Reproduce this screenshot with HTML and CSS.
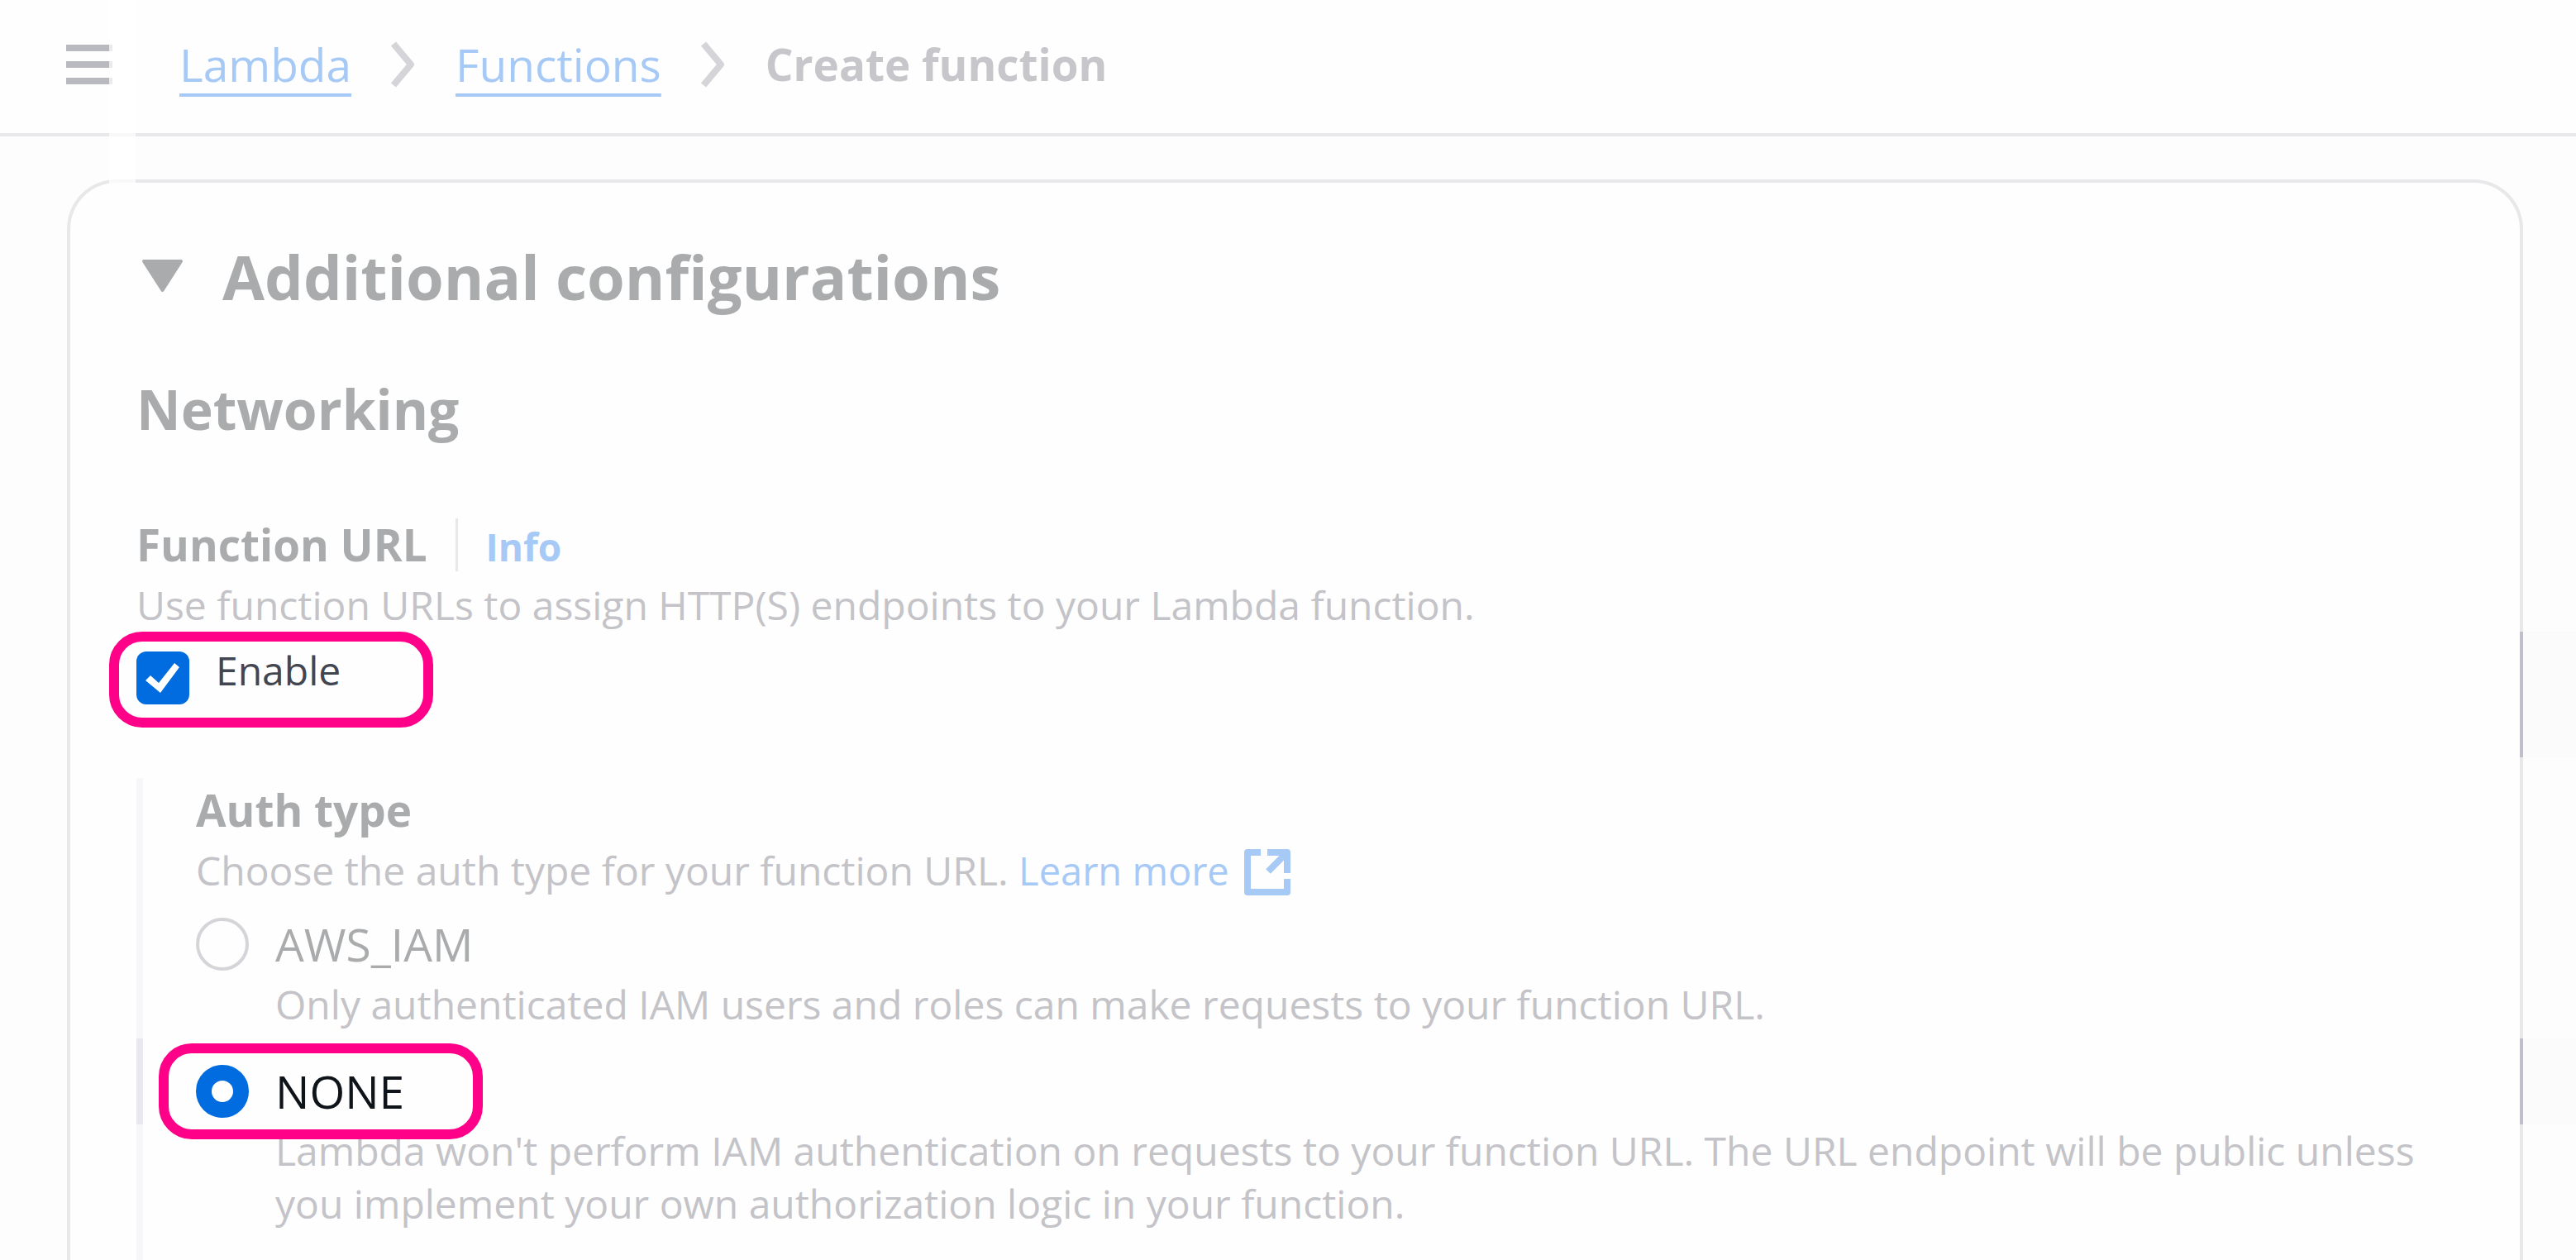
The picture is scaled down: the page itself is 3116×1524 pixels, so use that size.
FILE: index.html
```html
<!DOCTYPE html>
<html lang="en">
<head>
  <meta charset="UTF-8">
  <title>Create function - Lambda</title>
  <link rel="stylesheet" href="styles.css">
</head>
<body>
  <header>
    <button class="menu-button" aria-label="Open menu">
      <svg width="56" height="48" viewBox="0 0 56 48">
        <path d="M0 4H56M0 24H56M0 44H56" stroke="currentColor" stroke-width="8"/>
      </svg>
    </button>
    <nav class="breadcrumbs">
      <a href="#">Lambda</a>
      <svg class="chevron" width="32" height="56" viewBox="0 0 32 56">
        <path d="M4 3L25 28L4 53" fill="none" stroke="currentColor" stroke-width="8" stroke-linejoin="round"/>
      </svg>
      <a href="#">Functions</a>
      <svg class="chevron" width="32" height="56" viewBox="0 0 32 56">
        <path d="M4 3L25 28L4 53" fill="none" stroke="currentColor" stroke-width="8" stroke-linejoin="round"/>
      </svg>
      <strong>Create function</strong>
    </nav>
  </header>

  <main>
    <div class="card">
      <h2>
        <svg width="64" height="64" viewBox="0 0 64 64">
          <path d="M9 13H54L31.500 48Z" fill="currentColor" stroke="currentColor" stroke-width="4" stroke-linejoin="round"/>
        </svg>
        Additional configurations
      </h2>
      <h3>Networking</h3>

      <div class="label-row">
        <span class="label">Function URL</span>
        <span class="divider"></span>
        <a class="info" href="#">Info</a>
      </div>
      <p class="description">Use function URLs to assign HTTP(S) endpoints to your Lambda function.</p>
      <label class="highlight highlight-check">
        <span class="checkbox">
          <input type="checkbox" checked>
          <svg width="64" height="64" viewBox="0 0 64 64">
            <path d="M11 35L17 29L27 38L46 14L52 19L29 50Z" fill="#fff"/>
          </svg>
        </span>
        Enable
      </label>

      <section class="nested">
        <div class="label">Auth type</div>
        <p class="description">Choose the auth type for your function URL.
          <a class="learn-more" href="#">Learn more<svg width="56" height="56" viewBox="0 0 56 56">
            <path d="M20 4H4V52H52V36M28 4H52V29M52 4L29 27" fill="none" stroke="currentColor" stroke-width="8" stroke-linejoin="round"/>
          </svg></a>
        </p>

        <label class="option">
          <input type="radio" name="auth" value="AWS_IAM">
          AWS_IAM
        </label>
        <p class="description option-text">Only authenticated IAM users and roles can make requests to your function URL.</p>

        <label class="option highlight highlight-radio">
          <input type="radio" name="auth" value="NONE" checked>
          NONE
        </label>
        <p class="description option-text option-text-last">Lambda won't perform IAM authentication on requests to your function URL. The URL endpoint will be public unless you implement your own authorization logic in your function.</p>
        <span class="nested-mark"></span>
      </section>

      <span class="edge edge-check"></span>
      <span class="edge edge-radio"></span>
    </div>
  </main>
  <div class="veil"></div>
</body>
</html>
```
FILE: styles.css
```css
* {
  box-sizing: border-box;
}

body {
  display: flex;
  flex-direction: column;
  min-height: 100vh;
  margin: 0;
  font-family: "Open Sans", "Noto Sans", sans-serif;
  font-size: 48px;
  line-height: 64px;
  color: #a9abac;
  background-color: #fdfdfd;
  overflow-x: hidden;
}

h2, h3, p {
  margin: 0;
}

a {
  color: #a6c9f6;
  text-decoration: none;
}

input {
  appearance: none;
  flex: none;
  width: 64px;
  height: 64px;
  margin: 0;
}

/* top bar */
header {
  display: flex;
  align-items: center;
  gap: 81px;
  padding: 38px 80px 43px;
  line-height: 80px;
  background-color: #fefefe;
  border-bottom: 4px solid #e8e8ea;
}

.menu-button {
  display: flex;
  padding: 0;
  border: none;
  background: none;
  color: #b9bac0;
  cursor: pointer;
}

.breadcrumbs {
  display: flex;
  align-items: center;
  gap: 47px;
  font-size: 55px;
}

.breadcrumbs a {
  text-decoration: underline;
  text-decoration-thickness: 4px;
  text-underline-offset: 14px;
}

.breadcrumbs strong {
  font-size: 53px;
  color: #c6c6cb;
}

.chevron {
  color: #d5d5d9;
}

/* card */
main {
  flex: 1;
  display: flex;
  padding: 52px 64px 0 81px;
}

.card {
  position: relative;
  flex: 1;
  display: flex;
  flex-direction: column;
  padding: 69px 82px 0 80px;
  background-color: #fefefe;
  border: 4px solid #e8e8ea;
  border-bottom: none;
  border-radius: 60px 60px 0 0;
}

h2 {
  display: flex;
  align-items: center;
  gap: 40px;
  font-size: 74px;
  line-height: 90px;
}

h3 {
  margin-top: 74px;
  font-size: 66px;
  line-height: 80px;
}

.label-row {
  display: flex;
  align-items: baseline;
  gap: 34px;
  margin-top: 93px;
}

.label {
  font-size: 53px;
  font-weight: 700;
}

.divider {
  align-self: stretch;
  width: 3px;
  background-color: #e8e8ea;
}

.info {
  font-size: 46px;
  font-weight: 700;
  line-height: 48px;
}

.description {
  margin-top: 9px;
  color: #c3c3c8;
}

/* pink frames */
.highlight {
  position: relative;
  z-index: 1;
  display: flex;
  width: 392px;
  height: 116px;
  border: 12px solid #ff0089;
  border-radius: 40px;
  background-color: #fefefe;
}

.highlight-check {
  gap: 32px;
  margin-left: -33px;
  padding: 3px 21px;
  color: #424650;
}

.checkbox {
  display: grid;
  margin-top: 9px;
}

.checkbox input,
.checkbox svg {
  grid-area: 1 / 1;
}

.checkbox input {
  border-radius: 12px;
  background-color: #006ce0;
}

.checkbox svg {
  z-index: 1;
  pointer-events: none;
}

/* auth type */
.nested {
  position: relative;
  flex: 1;
  margin-top: 61px;
  padding: 7px 0 32px 64px;
  border-left: 8px solid #f7f7f9;
}

.learn-more {
  font-size: 47px;
}

.learn-more svg {
  margin-left: 18px;
  vertical-align: -12px;
}

.option {
  display: flex;
  align-items: center;
  gap: 32px;
  margin-top: 25px;
  font-size: 55px;
}

.option input {
  border: 4px solid #d5d5d9;
  border-radius: 50%;
}

.option input:checked {
  border: 19px solid #006ce0;
  background-color: #fff;
}

.option-text {
  margin-left: 96px;
}

.highlight-radio {
  margin-top: 15px;
  margin-left: -45px;
  padding: 0 33px;
  color: #0f141a;
}

.option-text-last {
  margin-top: -18px;
}

/* darker bits of the frame beside the highlighted rows */
.nested-mark {
  position: absolute;
  top: 315px;
  left: -8px;
  width: 8px;
  height: 104px;
  background-color: #e9e8f0;
}

.edge {
  position: absolute;
  right: -68px;
  width: 68px;
  border-left: 4px solid #c0bfc9;
  background-color: #fbfbfb;
}

.edge-check {
  top: 543px;
  height: 152px;
}

.edge-radio {
  top: 1035px;
  height: 104px;
}

.veil {
  position: absolute;
  top: 0;
  left: 132px;
  width: 32px;
  height: 222px;
  background-color: #fff;
  opacity: 0.7;
}
```
